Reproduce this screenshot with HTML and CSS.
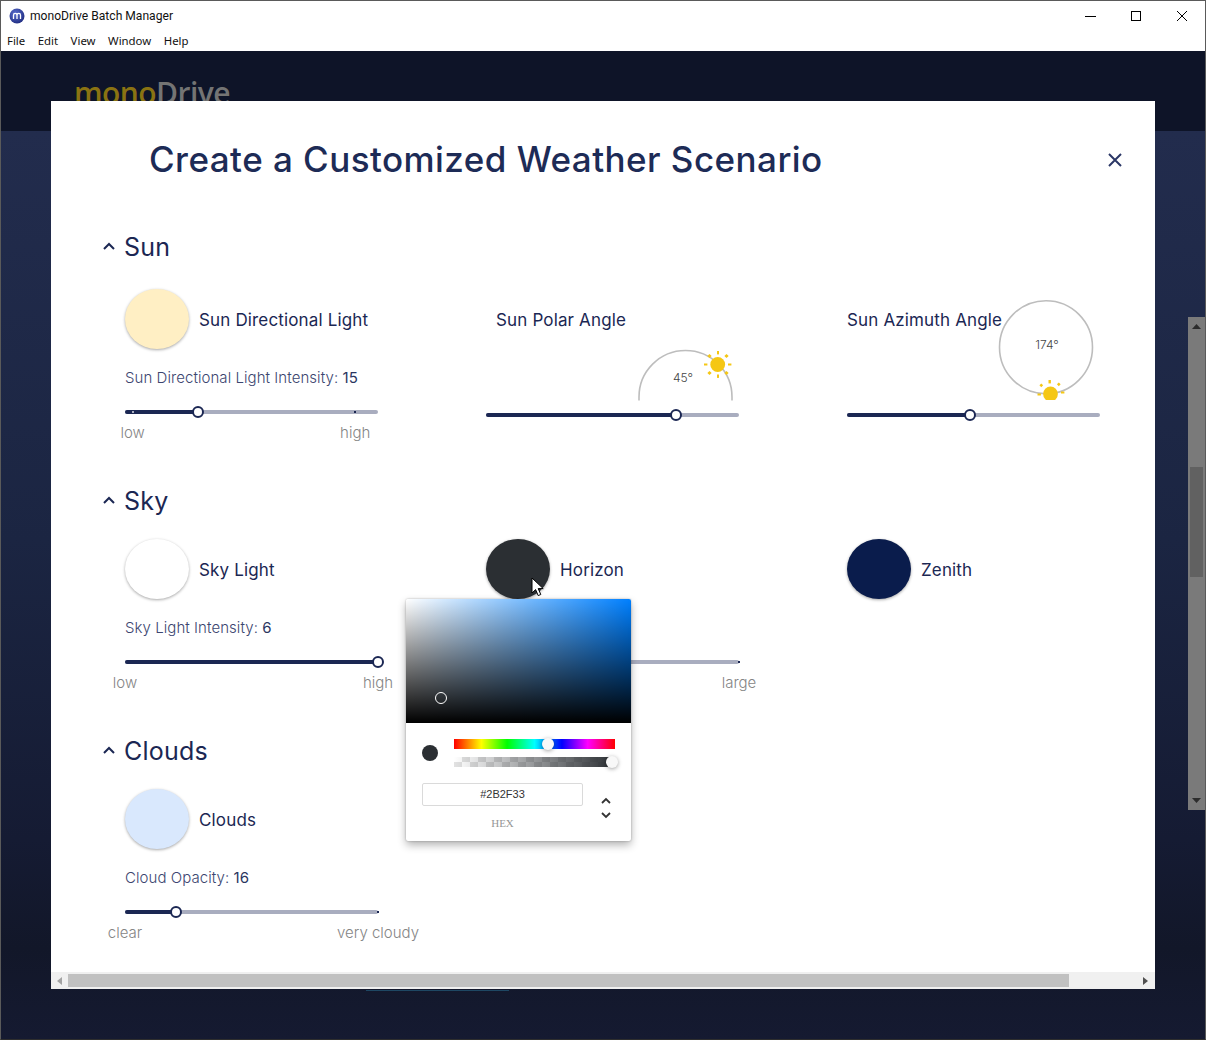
FILE: index.html
```html
<!DOCTYPE html>
<html lang="en">

<head>
    <meta charset="UTF-8">
    <meta name="viewport" content="width=device-width, initial-scale=1.0">
    <title>monoDrive Batch Manager</title>
    <link rel="stylesheet" href="styles.css">
</head>

<body>
    <div class="window">
        <div class="titlebar">
            <svg class="app-icon" width="16" height="16" viewBox="0 0 16 16">
                <defs>
                    <radialGradient id="iconBlue" cx="0.4" cy="0.35" r="0.7">
                        <stop offset="0" stop-color="#5b6fd0"/>
                        <stop offset="1" stop-color="#1f2c80"/>
                    </radialGradient>
                </defs>
                <circle cx="8" cy="8" r="7.5" fill="url(#iconBlue)"/>
                <path d="M4.5 11V7.2a1.6 1.6 0 0 1 3.5 0V11M8 7.2a1.6 1.6 0 0 1 3.5 0V11" fill="none" stroke="#fff" stroke-width="1.3"/>
            </svg>
            <span class="app-name">monoDrive Batch Manager</span>
            <div class="win-controls">
                <svg width="12" height="12" viewBox="0 0 12 12"><path d="M1 6.5h11" stroke="#000" stroke-width="1"/></svg>
                <svg width="12" height="12" viewBox="0 0 12 12"><rect x="1.5" y="1.5" width="9" height="9" fill="none" stroke="#000" stroke-width="1"/></svg>
                <svg width="12" height="12" viewBox="0 0 12 12"><path d="M1 1l10 10M11 1L1 11" stroke="#000" stroke-width="1"/></svg>
            </div>
        </div>
        <div class="menubar">
            <span>File</span>
            <span>Edit</span>
            <span>View</span>
            <span>Window</span>
            <span>Help</span>
        </div>

        <div class="app">
            <div class="app-header">
                <span class="logo"><span class="logo-mono">mono</span><span class="logo-drive">Drive</span></span>
            </div>
            <div class="app-body"></div>
            <div class="peek-line"></div>

            <div class="page-scroll">
                <svg class="page-arrow" width="9" height="5" viewBox="0 0 9 5"><path d="M4.5 0L9 5H0z" fill="#2c2c2c"/></svg>
                <div class="page-thumb"></div>
                <svg class="page-arrow page-arrow-down" width="9" height="5" viewBox="0 0 9 5"><path d="M4.5 5L9 0H0z" fill="#2c2c2c"/></svg>
            </div>

            <div class="modal">
                <div class="modal-content">
                    <div class="modal-head">
                        <h1>Create a Customized Weather Scenario</h1>
                        <svg class="modal-close" width="14" height="14" viewBox="0 0 14 14"><path d="M1 1l12 12M13 1L1 13" stroke="#2b3766" stroke-width="2"/></svg>
                    </div>

                    <section class="section section-sun">
                        <h2 class="section-title">
                            <svg width="12" height="8" viewBox="0 0 12 8"><path d="M1 7l5-5 5 5" fill="none" stroke="#1b2753" stroke-width="2"/></svg>
                            Sun
                        </h2>
                        <div class="section-grid">
                            <div class="col">
                                <div class="swatch-row">
                                    <div class="swatch swatch-sun"></div>
                                    <span class="swatch-name">Sun Directional Light</span>
                                </div>
                                <div class="value-label">Sun Directional Light Intensity: <b>15</b></div>
                                <div class="slider">
                                    <div class="slider-track" style="width: 29%"></div>
                                    <i class="mark mark-light" style="left: 3%"></i>
                                    <i class="mark" style="left: 91%"></i>
                                    <div class="slider-thumb" style="left: 29%"></div>
                                    <span class="mark-label" style="left: 3%">low</span>
                                    <span class="mark-label" style="left: 91%">high</span>
                                </div>
                            </div>

                            <div class="col">
                                <div class="dial-stack">
                                    <span class="dial-name dial-name-polar">Sun Polar Angle</span>
                                    <svg class="dial dial-polar" width="110" height="56" viewBox="630 345 110 55">
                                        <path d="M639 400v-3.5a46.5 46.5 0 0 1 93 0v3.5" fill="none" stroke="#bdbdbd" stroke-width="1.6"/>
                                        <text class="dial-text" x="683" y="381.5" text-anchor="middle">45°</text>
                                        <circle cx="717.7" cy="364" r="7.4" fill="#f5c714"/>
                                        <g fill="#f5c714">
                                            <rect x="717" y="350.5" width="2" height="3.4"/>
                                            <rect x="717" y="374" width="2" height="3.4"/>
                                            <rect x="704" y="363" width="3.4" height="2"/>
                                            <rect x="728" y="363" width="3.4" height="2"/>
                                            <rect x="708" y="354" width="3" height="3" transform="rotate(45 709.5 355.5)"/>
                                            <rect x="725" y="354" width="3" height="3" transform="rotate(45 726.5 355.5)"/>
                                            <rect x="708" y="371" width="3" height="3" transform="rotate(45 709.5 372.5)"/>
                                            <rect x="725" y="371" width="3" height="3" transform="rotate(45 726.5 372.5)"/>
                                        </g>
                                    </svg>
                                </div>
                                <div class="slider slider-dial">
                                    <div class="slider-track" style="width: 75%"></div>
                                    <div class="slider-thumb" style="left: 75%"></div>
                                </div>
                            </div>

                            <div class="col">
                                <div class="dial-stack">
                                    <span class="dial-name">Sun Azimuth Angle</span>
                                    <svg class="dial dial-azimuth" width="104" height="102" viewBox="995 298 104 102">
                                        <circle cx="1046" cy="347.2" r="46.5" fill="none" stroke="#bdbdbd" stroke-width="1.6"/>
                                        <text class="dial-text" x="1047" y="349" text-anchor="middle">174°</text>
                                        <circle cx="1050.5" cy="394" r="7.4" fill="#f5c714"/>
                                        <g fill="#f5c714">
                                            <rect x="1048.5" y="380" width="2.4" height="3.4"/>
                                            <rect x="1057.5" y="383" width="2.6" height="2.6" transform="rotate(45 1058.8 384.3)"/>
                                            <rect x="1040" y="384" width="2.6" height="2.6" transform="rotate(45 1041.3 385.3)"/>
                                            <rect x="1037.5" y="393.5" width="3.4" height="2"/>
                                            <rect x="1061" y="391.5" width="3.4" height="2"/>
                                        </g>
                                    </svg>
                                </div>
                                <div class="slider slider-dial">
                                    <div class="slider-track" style="width: 48.6%"></div>
                                    <div class="slider-thumb" style="left: 48.6%"></div>
                                </div>
                            </div>
                        </div>
                    </section>

                    <section class="section">
                        <h2 class="section-title">
                            <svg width="12" height="8" viewBox="0 0 12 8"><path d="M1 7l5-5 5 5" fill="none" stroke="#1b2753" stroke-width="2"/></svg>
                            Sky
                        </h2>
                        <div class="section-grid">
                            <div class="col">
                                <div class="swatch-row">
                                    <div class="swatch swatch-white"></div>
                                    <span class="swatch-name">Sky Light</span>
                                </div>
                                <div class="value-label">Sky Light Intensity: <b>6</b></div>
                                <div class="slider">
                                    <div class="slider-track" style="width: 100%"></div>
                                    <div class="slider-thumb" style="left: 100%"></div>
                                    <span class="mark-label" style="left: 0%">low</span>
                                    <span class="mark-label" style="left: 100%">high</span>
                                </div>
                            </div>
                            <div class="col">
                                <div class="swatch-row">
                                    <div class="swatch swatch-horizon"></div>
                                    <span class="swatch-name">Horizon</span>
                                </div>
                                <div class="value-label">&nbsp;</div>
                                <div class="slider">
                                    <i class="mark" style="left: 100%"></i>
                                    <span class="mark-label" style="left: 100%">large</span>
                                </div>
                            </div>
                            <div class="col">
                                <div class="swatch-row">
                                    <div class="swatch swatch-zenith"></div>
                                    <span class="swatch-name">Zenith</span>
                                </div>
                            </div>
                        </div>
                    </section>

                    <section class="section">
                        <h2 class="section-title">
                            <svg width="12" height="8" viewBox="0 0 12 8"><path d="M1 7l5-5 5 5" fill="none" stroke="#1b2753" stroke-width="2"/></svg>
                            Clouds
                        </h2>
                        <div class="section-grid">
                            <div class="col">
                                <div class="swatch-row">
                                    <div class="swatch swatch-clouds"></div>
                                    <span class="swatch-name">Clouds</span>
                                </div>
                                <div class="value-label">Cloud Opacity: <b>16</b></div>
                                <div class="slider">
                                    <div class="slider-track" style="width: 20%"></div>
                                    <i class="mark" style="left: 100%"></i>
                                    <div class="slider-thumb" style="left: 20%"></div>
                                    <span class="mark-label" style="left: 0%">clear</span>
                                    <span class="mark-label" style="left: 100%">very cloudy</span>
                                </div>
                            </div>
                        </div>
                    </section>
                </div>

                <div class="hscroll">
                    <svg class="hscroll-arrow" width="5" height="8" viewBox="0 0 5 8"><path d="M0 4l5-4v8z" fill="#a3a3a3"/></svg>
                    <div class="hscroll-thumb"></div>
                    <svg class="hscroll-arrow" width="5" height="8" viewBox="0 0 5 8"><path d="M5 4L0 0v8z" fill="#505050"/></svg>
                </div>

                <!-- colour picker popover open from Horizon swatch -->
                <div class="picker">
                    <div class="picker-sat">
                        <div class="picker-sat-dot"></div>
                    </div>
                    <div class="picker-body">
                        <div class="picker-controls">
                            <div class="picker-preview"></div>
                            <div class="picker-bars">
                                <div class="hue-bar"><div class="bar-thumb" style="left: 58.3%"></div></div>
                                <div class="alpha-bar"><div class="bar-thumb" style="left: 98%"></div></div>
                            </div>
                        </div>
                        <div class="picker-fields">
                            <div class="hex-wrap">
                                <div class="hex-input">#2B2F33</div>
                                <div class="hex-label">HEX</div>
                            </div>
                            <svg class="picker-toggle" width="12" height="22" viewBox="0 0 12 22">
                                <path d="M2 6l4-4 4 4M2 16l4 4 4-4" fill="none" stroke="#333" stroke-width="1.8"/>
                            </svg>
                        </div>
                    </div>
                </div>

                <svg class="cursor" width="14" height="20" viewBox="0 0 14 20">
                    <path d="M1 1v15l3.6-3.4 2.6 6 2.6-1.1-2.6-5.9h5z" fill="#fff" stroke="#000" stroke-width="1"/>
                </svg>
            </div>
        </div>
    </div>
</body>

</html>
```

FILE: styles.css
```css
* {
    box-sizing: border-box;
}
html, body {
    margin: 0;
    height: 100%;
    overflow: hidden;
}
body {
    font-family: Inter, "Open Sans", sans-serif;
    color: #1b2753;
}
.window {
    width: 1206px;
    height: 1040px;
    display: flex;
    flex-direction: column;
    border: 1px solid #5a5a5a;
    border-bottom-color: #2e2e2e;
    background-color: white;
}
.titlebar {
    height: 29px;
    flex: none;
    display: flex;
    align-items: center;
    padding-left: 8px;
    font-family: Roboto, sans-serif;
    font-size: 12.1px;
    color: #111;
}
.app-icon {
    margin-right: 5px;
}
.win-controls {
    margin-left: auto;
    display: flex;
    gap: 34px;
    padding-right: 17px;
}
.menubar {
    height: 21px;
    flex: none;
    display: flex;
    gap: 12.5px;
    padding: 2px 0 0 6px;
    font-family: "Noto Sans", sans-serif;
    font-size: 11.4px;
    line-height: 18px;
    color: #111;
}
.app {
    flex: 1;
    position: relative;
    display: flex;
    flex-direction: column;
    overflow: hidden;
}
.app-header {
    height: 80px;
    flex: none;
    background-color: #0e1428;
    padding: 22px 0 0 73px;
}
.logo {
    font-family: "Open Sans", sans-serif;
    font-size: 30px;
    font-weight: 600;
    line-height: 40px;
    letter-spacing: -0.55px;
}
.logo-mono {
    color: #8a7312;
}
.logo-drive {
    color: #747474;
}
.app-body {
    flex: 1;
    background: linear-gradient(180deg, #222c4d 0, #1b2542 45%, #151b33 78%, #121729 90%, #151a31 100%);
}
.peek-line {
    position: absolute;
    left: 365px;
    top: 939px;
    width: 143px;
    height: 1px;
    background-color: #1e4763;
}
.page-scroll {
    position: absolute;
    right: 0;
    top: 266px;
    width: 17px;
    height: 493px;
    background-color: #7a7a7a;
    display: flex;
    flex-direction: column;
    align-items: center;
}
.page-arrow {
    position: absolute;
    top: 7px;
}
.page-arrow-down {
    top: auto;
    bottom: 7px;
}
.page-thumb {
    position: absolute;
    top: 150px;
    left: 2px;
    right: 2px;
    height: 110px;
    background-color: #616161;
}
.modal {
    position: absolute;
    left: 50px;
    top: 50px;
    width: 1104px;
    height: 888px;
    background-color: white;
    display: flex;
    flex-direction: column;
}
.modal-content {
    flex: 1;
    overflow: hidden;
}
.modal-head {
    position: relative;
    padding: 38px 0 0 98px;
    height: 131px;
}
h1 {
    margin: 0;
    font-size: 35px;
    line-height: 40px;
    font-weight: 500;
    letter-spacing: 0.45px;
    color: #1d2b56;
}
.modal-close {
    position: absolute;
    left: 1057px;
    top: 52px;
}
.section {
    padding-bottom: 68px;
}
.section-sun {
    padding-bottom: 65px;
}
.section-title {
    margin: 0;
    padding-left: 52px;
    height: 30px;
    display: flex;
    align-items: center;
    gap: 9px;
    font-size: 25px;
    font-weight: 400;
    line-height: 30px;
    letter-spacing: 0.2px;
    color: #1b2753;
}
.section-title svg {
    margin-bottom: 2px;
}
.section-grid {
    display: grid;
    grid-template-columns: repeat(3, 361px);
    padding: 23px 0 0 74px;
}
.section-sun .section-grid {
    padding-top: 27px;
}
.col {
    width: 253px;
}
.swatch-row {
    height: 60px;
    display: flex;
    align-items: center;
    gap: 10px;
    white-space: nowrap;
}
.swatch {
    width: 64px;
    height: 60px;
    flex: none;
    border-radius: 50%;
    box-shadow: 0 1px 3px rgba(0, 0, 0, 0.35);
}
.swatch-sun {
    background-color: #ffefc4;
}
.swatch-white {
    background-color: white;
}
.swatch-horizon {
    background-color: #2b2f33;
}
.swatch-zenith {
    background-color: #0a1c4c;
}
.swatch-clouds {
    background-color: #d9e8fd;
}
.swatch-name, .dial-name {
    font-size: 17px;
    line-height: 20px;
    color: #1b2753;
    letter-spacing: 0.15px;
}
.swatch-name {
    margin-top: 2px;
}
.value-label {
    margin-top: 19px;
    height: 20px;
    font-size: 15px;
    line-height: 20px;
    font-weight: 300;
    letter-spacing: 0.06px;
    color: #3c4670;
    white-space: nowrap;
}
.value-label b {
    font-weight: 400;
    color: #2a3560;
}
.slider {
    position: relative;
    height: 12px;
    margin-top: 18px;
}
.slider::before {
    content: "";
    position: absolute;
    left: 0;
    right: 0;
    top: 4px;
    height: 4px;
    border-radius: 2px;
    background-color: #a9adbf;
}
.slider-dial {
    margin-top: 9px;
}
.slider-track {
    position: absolute;
    left: 0;
    top: 4px;
    height: 4px;
    border-radius: 2px;
    background-color: #1b2753;
}
.slider-thumb {
    position: absolute;
    top: 0;
    width: 12px;
    height: 12px;
    margin-left: -6px;
    border-radius: 50%;
    background-color: white;
    border: 2px solid #1b2753;
}
.mark {
    position: absolute;
    top: 5px;
    width: 2px;
    height: 2px;
    margin-left: -1px;
    background-color: #1b2753;
}
.mark-light {
    background-color: #a9adbf;
}
.mark-label {
    position: absolute;
    top: 17px;
    transform: translateX(-50%);
    font-size: 15px;
    line-height: 20px;
    font-weight: 300;
    color: #858585;
    white-space: nowrap;
}
.dial-stack {
    display: grid;
    height: 111px;
}
.dial-name {
    grid-area: 1 / 1;
    margin-top: 21px;
    white-space: nowrap;
}
.dial-name-polar {
    margin-left: 10px;
}
.dial {
    grid-area: 1 / 1;
}
.dial-polar {
    margin: 56px 0 0 144px;
}
.dial-azimuth {
    margin: 9px 0 0 148px;
}
.dial-text {
    font-family: Inter, sans-serif;
    font-size: 12px;
    font-weight: 300;
    fill: #444;
}
.hscroll {
    height: 17px;
    flex: none;
    display: flex;
    align-items: center;
    background-color: #f0f0f0;
    padding: 0 6px;
}
.hscroll-thumb {
    height: 13px;
    width: 1001px;
    margin: 0 74px 0 6px;
    background-color: #c1c1c1;
}
.picker {
    position: absolute;
    left: 355px;
    top: 498px;
    width: 225px;
    height: 242px;
    background-color: white;
    border-radius: 2px;
    box-shadow: 0 0 2px rgba(0, 0, 0, 0.3), 0 4px 8px rgba(0, 0, 0, 0.3);
    font-family: "Liberation Sans", sans-serif;
}
.picker-sat {
    position: relative;
    height: 124px;
    border-radius: 2px 2px 0 0;
    background:
        linear-gradient(to top, #000, rgba(0, 0, 0, 0)),
        linear-gradient(to right, #fff, rgba(255, 255, 255, 0)),
        hsl(210, 100%, 50%);
}
.picker-sat-dot {
    position: absolute;
    left: 29px;
    top: 93px;
    width: 12px;
    height: 12px;
    border-radius: 50%;
    border: 1px solid white;
}
.picker-body {
    padding: 16px 16px 0;
}
.picker-controls {
    display: flex;
    align-items: center;
    gap: 16px;
}
.picker-preview {
    width: 16px;
    height: 16px;
    border-radius: 50%;
    background-color: #2b2f33;
    flex: none;
}
.picker-bars {
    width: 161px;
    display: flex;
    flex-direction: column;
    gap: 8px;
}
.hue-bar, .alpha-bar {
    position: relative;
    height: 10px;
}
.hue-bar {
    background: linear-gradient(to right, #f00 0%, #ff0 17%, #0f0 33%, #0ff 50%, #00f 67%, #f0f 83%, #f00 100%);
}
.alpha-bar {
    background:
        linear-gradient(to right, rgba(43, 47, 51, 0), #2b2f33),
        repeating-conic-gradient(#e2e2e2 0 25%, #fff 0 50%) 0 0 / 16px 10px;
}
.bar-thumb {
    position: absolute;
    top: -1px;
    width: 12px;
    height: 12px;
    margin-left: -6px;
    border-radius: 50%;
    background-color: #f8f8f8;
    box-shadow: 0 1px 4px rgba(0, 0, 0, 0.37);
}
.picker-fields {
    display: flex;
    margin-top: 16px;
}
.hex-wrap {
    width: 161px;
}
.hex-input {
    height: 23px;
    border: 1px solid #dadada;
    border-radius: 2px;
    font-size: 11px;
    line-height: 21px;
    text-align: center;
    color: #333;
}
.hex-label {
    margin-top: 10px;
    font-family: "Liberation Serif", serif;
    font-size: 11px;
    line-height: 14px;
    text-align: center;
    color: #969696;
}
.picker-toggle {
    margin: 14px 0 0 17px;
}
.cursor {
    position: absolute;
    left: 480px;
    top: 476px;
}
```
